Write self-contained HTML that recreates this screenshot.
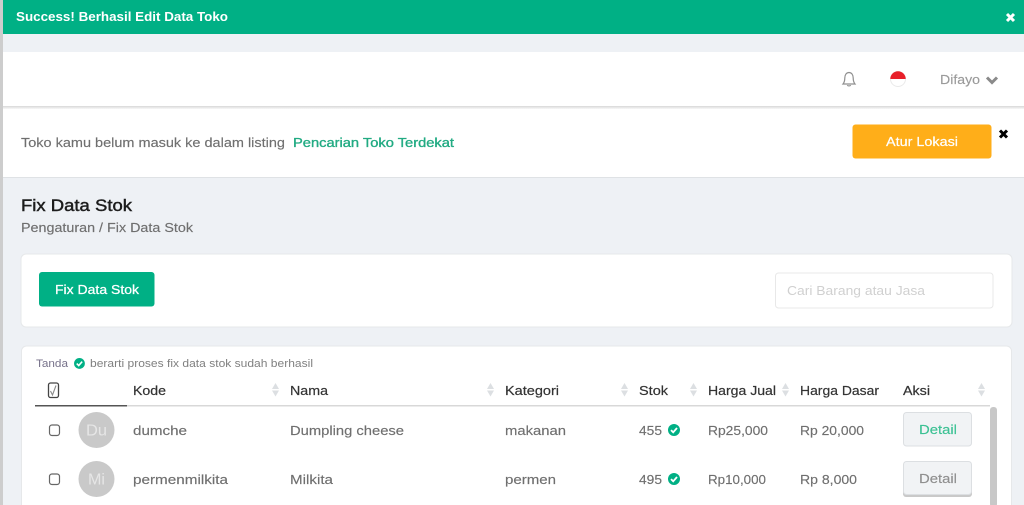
<!DOCTYPE html>
<html><head><meta charset="utf-8"><style>
html,body{margin:0;padding:0;width:1024px;height:505px;overflow:hidden;background:#eef1f5}
svg{display:block;position:absolute;left:0;top:0}
text{font-family:"Liberation Sans",sans-serif;font-size:13px;fill:#6f6f6f;stroke:#6f6f6f;stroke-width:.15px}
.d{fill:#333;stroke:#333;stroke-width:.2px}
.s{fill:#dcdfe2}
</style></head><body>
<svg width="1024" height="505" viewBox="0 0 1024 505" xmlns="http://www.w3.org/2000/svg">
<defs>
<linearGradient id="sh" x1="0" y1="0" x2="0" y2="1"><stop offset="0" stop-color="#d8d8d8"/><stop offset="1" stop-color="#f8f8f8"/></linearGradient>
<g id="sort"><path d="M0 -1L3.500 -7L7 -1Z" class="s"/><path d="M0 0.500L3.500 6.500L7 0.500Z" class="s"/></g>
<g id="ck"><circle cx="0" cy="0" r="6" fill="#00b085"/><path d="M-3 0.100L-0.800 2.300L3 -2" fill="none" stroke="#fff" stroke-width="1.800"/></g>
</defs>
<rect width="1024" height="505" fill="#eef1f5"/>
<rect x="0" y="0" width="3" height="505" fill="#cdcdcd"/>
<rect x="3" y="0" width="1021" height="34" fill="#00b085"/>
<text x="16" y="21" textLength="212" lengthAdjust="spacingAndGlyphs" style="fill:#fff;stroke:none;font-weight:bold">Success! Berhasil Edit Data Toko</text>
<path d="M1007 14L1014 21M1014 14L1007 21" stroke="#fff" stroke-width="3"/>

<rect x="3" y="52" width="1021" height="54" fill="#fff"/>
<rect x="3" y="106" width="1021" height="3" fill="url(#sh)"/>
<path d="M843 84H855C853.300 82 853.200 80.500 853.200 78C853.200 74.800 851.600 72.500 849 72.500C846.400 72.500 844.800 74.800 844.800 78C844.800 80.500 844.700 82 843 84ZM847.300 85.200C848 86.200 850 86.200 850.700 85.200" fill="none" stroke="#8f8f8f" stroke-width="1.200"/>
<circle cx="898" cy="79" r="7.500" fill="#fff" stroke="#eaeaea" stroke-width="1"/>
<path d="M890.300 79A7.700 7.700 0 0 1 905.700 79Z" fill="#e8202a"/>
<text x="940" y="84" textLength="40" lengthAdjust="spacingAndGlyphs" style="fill:#9a9a9a;stroke:#9a9a9a">Difayo</text>
<path d="M987 77.500L992 82.500L997 77.500" fill="none" stroke="#8a8a8a" stroke-width="3"/>

<rect x="3" y="109" width="1021" height="68" fill="#fff"/>
<rect x="3" y="177" width="1021" height="1" fill="#dfe2e5"/>
<text x="21" y="147" textLength="264" lengthAdjust="spacingAndGlyphs">Toko kamu belum masuk ke dalam listing</text>
<text x="293" y="147" textLength="161" lengthAdjust="spacingAndGlyphs" style="fill:#22ab83;stroke:#22ab83;stroke-width:.35px">Pencarian Toko Terdekat</text>
<rect x="852.500" y="124.500" width="139" height="34" rx="3" fill="#ffae19"/>
<text x="886" y="146" textLength="72" lengthAdjust="spacingAndGlyphs" style="fill:#fff;stroke:#fff;stroke-width:.2px">Atur Lokasi</text>
<path d="M1000 130.500L1007 137.500M1007 130.500L1000 137.500" stroke="#000" stroke-width="3"/>

<text x="21" y="211" textLength="111" lengthAdjust="spacingAndGlyphs" style="font-size:16.500px;fill:#1c1c1c;stroke:#1c1c1c;stroke-width:.45px">Fix Data Stok</text>
<text x="21" y="232" textLength="172" lengthAdjust="spacingAndGlyphs">Pengaturan / Fix Data Stok</text>

<rect x="21" y="254" width="991" height="73" rx="5" fill="#fff" stroke="#e6e8ea" stroke-width="1"/>
<rect x="39" y="272" width="115.500" height="34.500" rx="3" fill="#00b085"/>
<text x="55" y="294" textLength="84" lengthAdjust="spacingAndGlyphs" style="fill:#fff;stroke:#fff;stroke-width:.25px">Fix Data Stok</text>
<rect x="775.500" y="273" width="217.500" height="35" rx="3" fill="#fff" stroke="#e8e8e8" stroke-width="1"/>
<text x="787" y="295" textLength="138" lengthAdjust="spacingAndGlyphs" style="fill:#d0d0d0;stroke:none">Cari Barang atau Jasa</text>

<rect x="21.500" y="346" width="990" height="170" rx="5" fill="#fff" stroke="#e6e8ea" stroke-width="1"/>
<text x="36" y="367" textLength="32" lengthAdjust="spacingAndGlyphs" style="font-size:11px;fill:#77728a;stroke:none">Tanda</text>
<use href="#ck" x="79.500" y="363.500" transform="translate(7.900 36.300) scale(.9)" />
<text x="90" y="367" textLength="223" lengthAdjust="spacingAndGlyphs" style="font-size:11px;fill:#808080;stroke:none">berarti proses fix data stok sudah berhasil</text>

<rect x="48.500" y="383" width="10" height="14.500" rx="2" fill="#fff" stroke="#444" stroke-width="1.300"/>
<path d="M50.500 391L52.500 395L56 385.500" fill="none" stroke="#8a8a8a" stroke-width="1.100"/>
<text x="133" y="395" textLength="33" lengthAdjust="spacingAndGlyphs" class="d">Kode</text>
<text x="290" y="395" textLength="38" lengthAdjust="spacingAndGlyphs" class="d">Nama</text>
<text x="505" y="395" textLength="54" lengthAdjust="spacingAndGlyphs" class="d">Kategori</text>
<text x="639" y="395" textLength="29" lengthAdjust="spacingAndGlyphs" class="d">Stok</text>
<text x="708" y="395" textLength="68" lengthAdjust="spacingAndGlyphs" class="d">Harga Jual</text>
<text x="800" y="395" textLength="79" lengthAdjust="spacingAndGlyphs" class="d">Harga Dasar</text>
<text x="903" y="395" textLength="27" lengthAdjust="spacingAndGlyphs" class="d">Aksi</text>
<use href="#sort" x="272" y="390"/>
<use href="#sort" x="487" y="390"/>
<use href="#sort" x="621" y="390"/>
<use href="#sort" x="690" y="390"/>
<use href="#sort" x="782" y="390"/>
<use href="#sort" x="978" y="390"/>
<rect x="35" y="405" width="955" height="1.500" fill="#d8d8d8"/>
<rect x="35" y="405" width="92" height="1.500" fill="#555"/>
<rect x="990" y="407" width="7" height="100" rx="3" fill="#c8c8c8"/>

<rect x="49.500" y="425" width="10" height="10.500" rx="2.500" fill="#fff" stroke="#666" stroke-width="1.200"/>
<circle cx="96.500" cy="430" r="18" fill="#c9c9c9"/>
<text x="86" y="435.500" textLength="21" lengthAdjust="spacingAndGlyphs" style="font-size:15.500px;fill:#e6e6e6;stroke:none">Du</text>
<text x="133" y="435" textLength="54" lengthAdjust="spacingAndGlyphs">dumche</text>
<text x="290" y="435" textLength="114" lengthAdjust="spacingAndGlyphs">Dumpling cheese</text>
<text x="505" y="435" textLength="61" lengthAdjust="spacingAndGlyphs">makanan</text>
<text x="639" y="435" textLength="23" lengthAdjust="spacingAndGlyphs">455</text>
<use href="#ck" x="674" y="430"/>
<text x="708" y="435" textLength="60" lengthAdjust="spacingAndGlyphs">Rp25,000</text>
<text x="800" y="435" textLength="64" lengthAdjust="spacingAndGlyphs">Rp 20,000</text>
<rect x="903.500" y="412.500" width="68" height="33.500" rx="3" fill="#f1f3f5" stroke="#dcdfe2" stroke-width="1"/>
<text x="919" y="434" textLength="38" lengthAdjust="spacingAndGlyphs" style="fill:#3cc194;stroke:#3cc194">Detail</text>

<rect x="49.500" y="474" width="10" height="10.500" rx="2.500" fill="#fff" stroke="#666" stroke-width="1.200"/>
<circle cx="96.500" cy="479" r="18" fill="#c9c9c9"/>
<text x="88" y="484.500" textLength="17" lengthAdjust="spacingAndGlyphs" style="font-size:15.500px;fill:#e6e6e6;stroke:none">Mi</text>
<text x="133" y="484" textLength="95" lengthAdjust="spacingAndGlyphs">permenmilkita</text>
<text x="290" y="484" textLength="43" lengthAdjust="spacingAndGlyphs">Milkita</text>
<text x="505" y="484" textLength="51" lengthAdjust="spacingAndGlyphs">permen</text>
<text x="639" y="484" textLength="23" lengthAdjust="spacingAndGlyphs">495</text>
<use href="#ck" x="674" y="479"/>
<text x="708" y="484" textLength="58" lengthAdjust="spacingAndGlyphs">Rp10,000</text>
<text x="800" y="484" textLength="57" lengthAdjust="spacingAndGlyphs">Rp 8,000</text>
<rect x="903" y="463" width="69" height="34" rx="3" fill="#c9c9c9"/>
<rect x="903.500" y="461.500" width="68" height="33" rx="3" fill="#f1f3f5" stroke="#dcdfe2" stroke-width="1"/>
<text x="919" y="483" textLength="38" lengthAdjust="spacingAndGlyphs" style="fill:#8f8f8f;stroke:#8f8f8f">Detail</text>
</svg>
</body></html>
